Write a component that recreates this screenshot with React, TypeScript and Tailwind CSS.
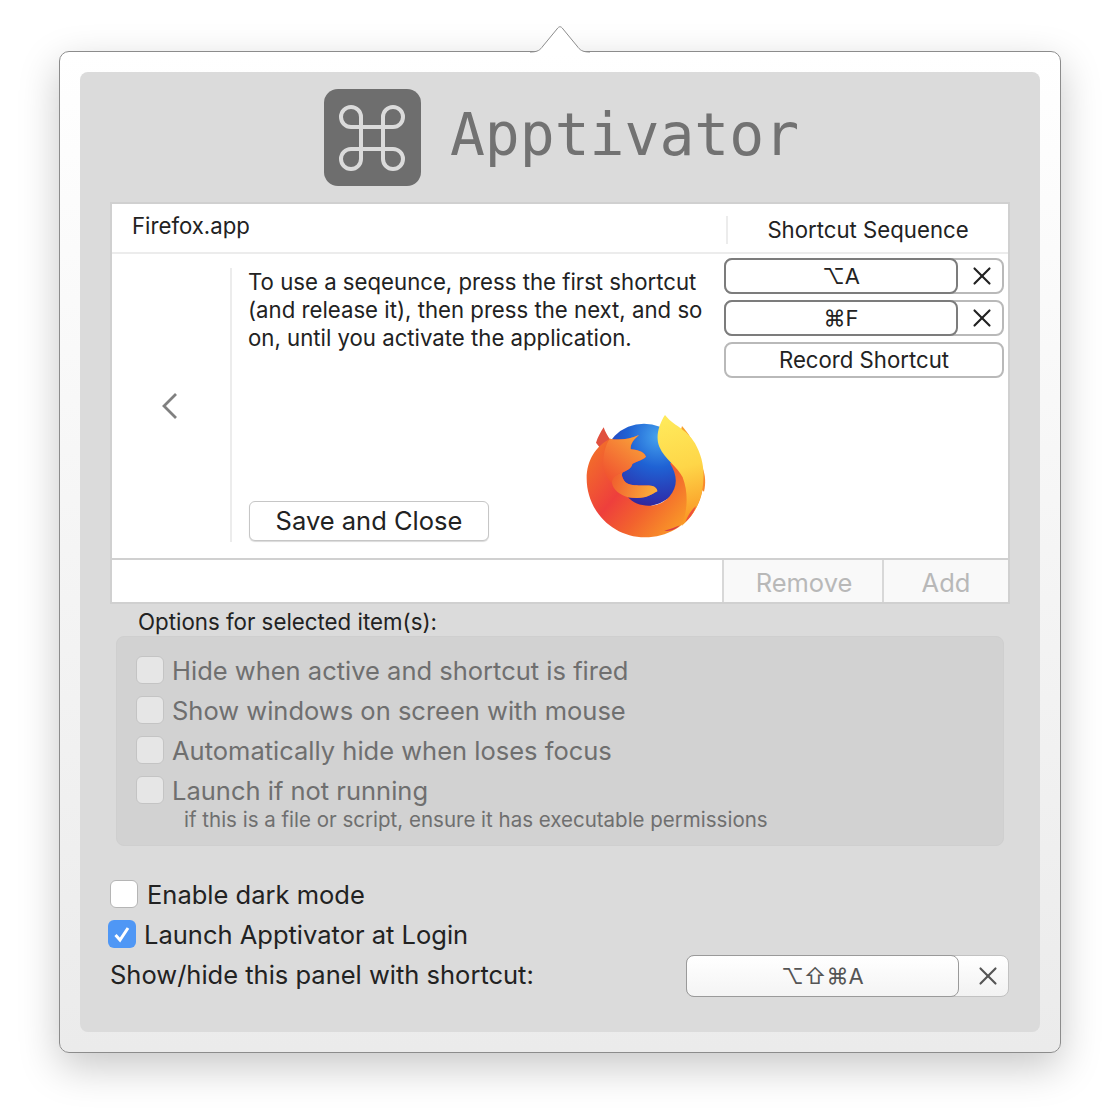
import { X } from "lucide-react";

const sans = "[font-family:Inter,'Noto_Sans',sans-serif]";

// traced over the reference, viewBox is 3x the crop at (570,400)
const FirefoxLogo = () => (
  <svg width="150" height="150" viewBox="0 0 450 450">
    <defs>
      <radialGradient id="ffBlue" gradientUnits="userSpaceOnUse" cx="265" cy="110" r="230">
        <stop offset="0" stopColor="#46a3ee" />
        <stop offset="0.4" stopColor="#1f62d4" />
        <stop offset="0.8" stopColor="#2b35b0" />
        <stop offset="1" stopColor="#3a1d8a" />
      </radialGradient>
      <linearGradient id="ffBody" gradientUnits="userSpaceOnUse" x1="70" y1="170" x2="350" y2="400">
        <stop offset="0" stopColor="#f2692c" />
        <stop offset="0.35" stopColor="#ee3f3c" />
        <stop offset="0.6" stopColor="#f2622e" />
        <stop offset="1" stopColor="#fba526" />
      </linearGradient>
      <linearGradient id="ffTail" gradientUnits="userSpaceOnUse" x1="290" y1="60" x2="370" y2="350">
        <stop offset="0" stopColor="#ffe95a" />
        <stop offset="0.5" stopColor="#fed648" />
        <stop offset="1" stopColor="#fa9a26" />
      </linearGradient>
      <linearGradient id="ffHead" gradientUnits="userSpaceOnUse" x1="215" y1="110" x2="110" y2="240">
        <stop offset="0" stopColor="#f9a53a" />
        <stop offset="1" stopColor="#f0502f" />
      </linearGradient>
      <linearGradient id="ffArm" gradientUnits="userSpaceOnUse" x1="260" y1="270" x2="130" y2="230">
        <stop offset="0" stopColor="#fbb13a" />
        <stop offset="1" stopColor="#f0602f" />
      </linearGradient>
    </defs>
    <circle cx="222" cy="195" r="124" fill="url(#ffBlue)" />
    <path d="M78 128 C84 110 92 96 101 82 C106 96 112 108 122 120 L95 150 Z" fill="#e0503f" />
    <path d="M330 100 L336 78 C348 92 358 104 368 125 Z" fill="#f9a02c" />
    <path d="M398 205 C406 225 408 250 402 275 L385 260 Z" fill="#f98a2c" />
    <path
      d="M50 235 C50 180 78 138 120 116 C145 122 178 118 207 105 C194 116 180 130 182 148 C198 150 220 152 228 170 C215 183 196 184 187 192 C184 206 170 212 160 216 C150 222 160 238 164 244 C176 262 220 254 248 258 C258 262 262 268 262 274 C250 280 240 288 222 292 C205 296 188 294 174 292 C200 322 262 330 298 290 C325 258 322 226 300 190 L340 180 L400 240 C400 340 320 412 225 412 C130 412 50 335 50 235 Z"
      fill="url(#ffBody)"
    />
    <path
      d="M285 45 C308 76 350 86 375 130 C395 166 403 202 400 240 C398 295 375 345 335 378 C350 340 358 285 338 232 C322 198 285 180 268 140 C255 110 268 70 285 45 Z"
      fill="url(#ffTail)"
    />
    <path d="M378 318 C372 338 360 354 346 366 C354 346 364 330 378 318 Z" fill="#ee4f3d" />
    <path d="M283 392 C300 388 315 382 330 376 C318 388 300 396 283 392 Z" fill="#d63b4a" />
    <path
      d="M120 116 C145 122 178 118 207 105 C194 116 180 130 182 148 C198 150 220 152 228 170 C215 183 196 184 187 192 C184 206 170 212 160 216 C140 222 125 232 126 250 C110 235 100 215 100 190 C100 165 105 135 120 116 Z"
      fill="url(#ffHead)"
    />
    <path
      d="M126 250 C124 232 140 222 160 216 C150 222 160 238 164 244 C176 262 220 254 248 258 C258 262 262 268 262 274 C250 280 240 288 222 292 C205 296 188 294 174 292 C150 285 130 270 126 250 Z"
      fill="url(#ffArm)"
    />
  </svg>
);

const CommandIcon = () => (
  <div className="flex h-[97px] w-[97px] items-center justify-center rounded-[14px] bg-[#6e6e6e]">
    <svg width="66" height="66" viewBox="0 0 66 66" fill="none" stroke="#dbdbdb" strokeWidth="4">
      <path d="M22 22 V12 A10 10 0 1 0 12 22 H54 A10 10 0 1 0 44 12 V54 A10 10 0 1 0 54 44 H12 A10 10 0 1 0 22 54 Z" />
    </svg>
  </div>
);

const ShortcutRow = ({ label }: { label: string }) => (
  <div className="relative h-[36px] w-[280px] rounded-[8px] border-2 border-[#b9b9b9]">
    <div className="absolute inset-[-2px] right-[44px] flex items-center justify-center rounded-[8px] border-2 border-[#7c7c7c] bg-white text-[22px] text-[#222]">
      {label}
    </div>
    <div className="absolute inset-y-0 right-0 flex w-[41px] items-center justify-center">
      <X size={30} strokeWidth={1.7} className="text-[#222]" />
    </div>
  </div>
);

const OptionRow = ({ label }: { label: string }) => (
  <div className="flex h-[40px] items-center gap-[8px]">
    <div className="h-[28px] w-[28px] rounded-[6px] border border-[#c4c4c4] bg-[#e6e6e6]" />
    <span className="pt-[2px] text-[25.5px] text-[#6f6f6f]">{label}</span>
  </div>
);

export default function App() {
  return (
    <div className={`h-[1120px] w-[1120px] bg-white pl-[59px] pt-[51px] ${sans}`}>
      <div className="relative h-[1002px] w-[1002px] rounded-[10px] border border-[#8c8c8c] bg-gradient-to-b from-white to-[#ebebeb] p-[20px] shadow-[0_14px_40px_rgba(0,0,0,0.22)]">
        {/* little arrow on top of the popover */}
        <svg className="absolute left-[470px] top-[-26px]" width="60" height="27" viewBox="0 0 60 27">
          <path d="M0 26 C8 26 10 24 13 20 L27 3 C29 0 31 0 33 3 L47 20 C50 24 52 26 60 26 V27 H0 Z" fill="#ffffff" />
          <path d="M0 26 C8 26 10 24 13 20 L27 3 C29 0 31 0 33 3 L47 20 C50 24 52 26 60 26" fill="none" stroke="#8c8c8c" />
        </svg>

        <div className="h-[960px] w-[960px] rounded-[8px] bg-[#dbdbdb] pt-[17px]">
          <div className="flex items-center justify-center gap-[29px] pl-[3px]">
            <CommandIcon />
            <span className="pb-[6px] text-[58px] leading-none text-[#727272] [font-family:'DejaVu_Sans_Mono',monospace]">Apptivator</span>
          </div>

          {/* table */}
          <div className="ml-[30px] mt-[16px] w-[900px] border-2 border-[#d0d0d0] bg-white">
            <div className="flex h-[50px] items-center border-b-2 border-[#ececec] text-[22.2px] text-[#222]">
              <span className="flex-1 pb-[4px] pl-[20px]">Firefox.app</span>
              <span className="mt-[4px] flex h-[28px] w-[282px] items-center justify-center border-l-2 border-[#ececec]">Shortcut Sequence</span>
            </div>
            <div className="flex h-[306px] border-b-2 border-[#d0d0d0]">
              <div className="flex w-[118px] shrink-0 items-center justify-center pr-[2px]">
                <svg width="18" height="28" viewBox="0 0 18 28" fill="none" stroke="#808080" strokeWidth="2.8">
                  <path d="M15 2 L3 14 L15 26" />
                </svg>
              </div>
              <div className="relative mb-[16px] mt-[14px] flex flex-1 flex-col justify-between border-l-2 border-[#ececec] pl-[16px]">
                <p className="text-[22.2px] leading-[28px] text-[#222]">
                  To use a seqeunce, press the first shortcut
                  <br />
                  (and release it), then press the next, and so
                  <br />
                  on, until you activate the application.
                </p>
                <div className="mb-[1px] ml-[1px] flex h-[40px] w-[240px] items-center justify-center rounded-[6px] border border-[#c6c6c6] bg-white text-[25.5px] text-[#222] shadow-[0_1px_1px_rgba(0,0,0,0.15)]">
                  Save and Close
                </div>
                <div className="absolute left-[338px] top-[132px]">
                  <FirefoxLogo />
                </div>
              </div>
              <div className="flex w-[284px] shrink-0 flex-col gap-[6px] pt-[4px]">
                <ShortcutRow label="⌥A" />
                <ShortcutRow label="⌘F" />
                <div className="flex h-[36px] w-[280px] items-center justify-center rounded-[8px] border-2 border-[#b9b9b9] text-[22.2px] text-[#222]">
                  Record Shortcut
                </div>
              </div>
            </div>
            <div className="flex h-[42px] justify-end text-[25.5px] text-[#b8b8b8]">
              <div className="flex w-[162px] items-center justify-center border-x-2 border-[#d8d8d8] bg-[#f9f9f9] pl-[2px] pt-[4px]">Remove</div>
              <div className="flex w-[124px] items-center justify-center bg-[#f9f9f9] pt-[4px]">Add</div>
            </div>
          </div>

          <div className="ml-[58px] mt-[3px] text-[22.3px] leading-[29px] text-[#222]">Options for selected item(s):</div>
          <div className="ml-[36px] h-[210px] w-[888px] rounded-[8px] border border-[#cfcfcf] bg-[#d2d2d2] pl-[19px] pt-[13px]">
            <OptionRow label="Hide when active and shortcut is fired" />
            <OptionRow label="Show windows on screen with mouse" />
            <OptionRow label="Automatically hide when loses focus" />
            <OptionRow label="Launch if not running" />
            <div className="pl-[48px] text-[20.5px] leading-[20px] text-[#6f6f6f]">if this is a file or script, ensure it has executable permissions</div>
          </div>

          <div className="ml-[30px] mt-[28px] text-[25.5px] text-[#222]">
            <div className="flex h-[40px] items-center gap-[9px]">
              <div className="h-[28px] w-[28px] rounded-[6px] border border-[#b5b5b5] bg-white" />
              <span className="pt-[2px]">Enable dark mode</span>
            </div>
            <div className="-ml-[2px] flex h-[40px] items-center gap-[8px]">
              <div className="flex h-[28px] w-[28px] items-center justify-center rounded-[6px] bg-[#4f97f5]">
                <svg width="18" height="18" viewBox="0 0 18 18" fill="none" stroke="#fff" strokeWidth="3">
                  <path d="M2.5 10 L7 15 L15 3" />
                </svg>
              </div>
              <span className="pt-[2px]">Launch Apptivator at Login</span>
            </div>
            <div className="mt-[1px] flex h-[42px] items-center justify-between pr-[31px]">
              <span className="pb-[2px]">Show/hide this panel with shortcut:</span>
              <div className="relative h-[42px] w-[323px] rounded-[8px] border border-[#c2c2c2] bg-gradient-to-b from-white to-[#f2f2f2]">
                <div className="absolute inset-[-1px] right-[49px] flex items-center justify-center rounded-[8px] border border-[#9a9a9a] bg-gradient-to-b from-white to-[#f4f4f4] text-[22px] text-[#555]">
                  ⌥⇧⌘A
                </div>
                <div className="absolute inset-y-0 right-0 flex w-[49px] items-center justify-center pl-[8px]">
                  <X size={30} strokeWidth={1.7} className="text-[#555]" />
                </div>
              </div>
            </div>
          </div>
        </div>
      </div>
    </div>
  );
}
